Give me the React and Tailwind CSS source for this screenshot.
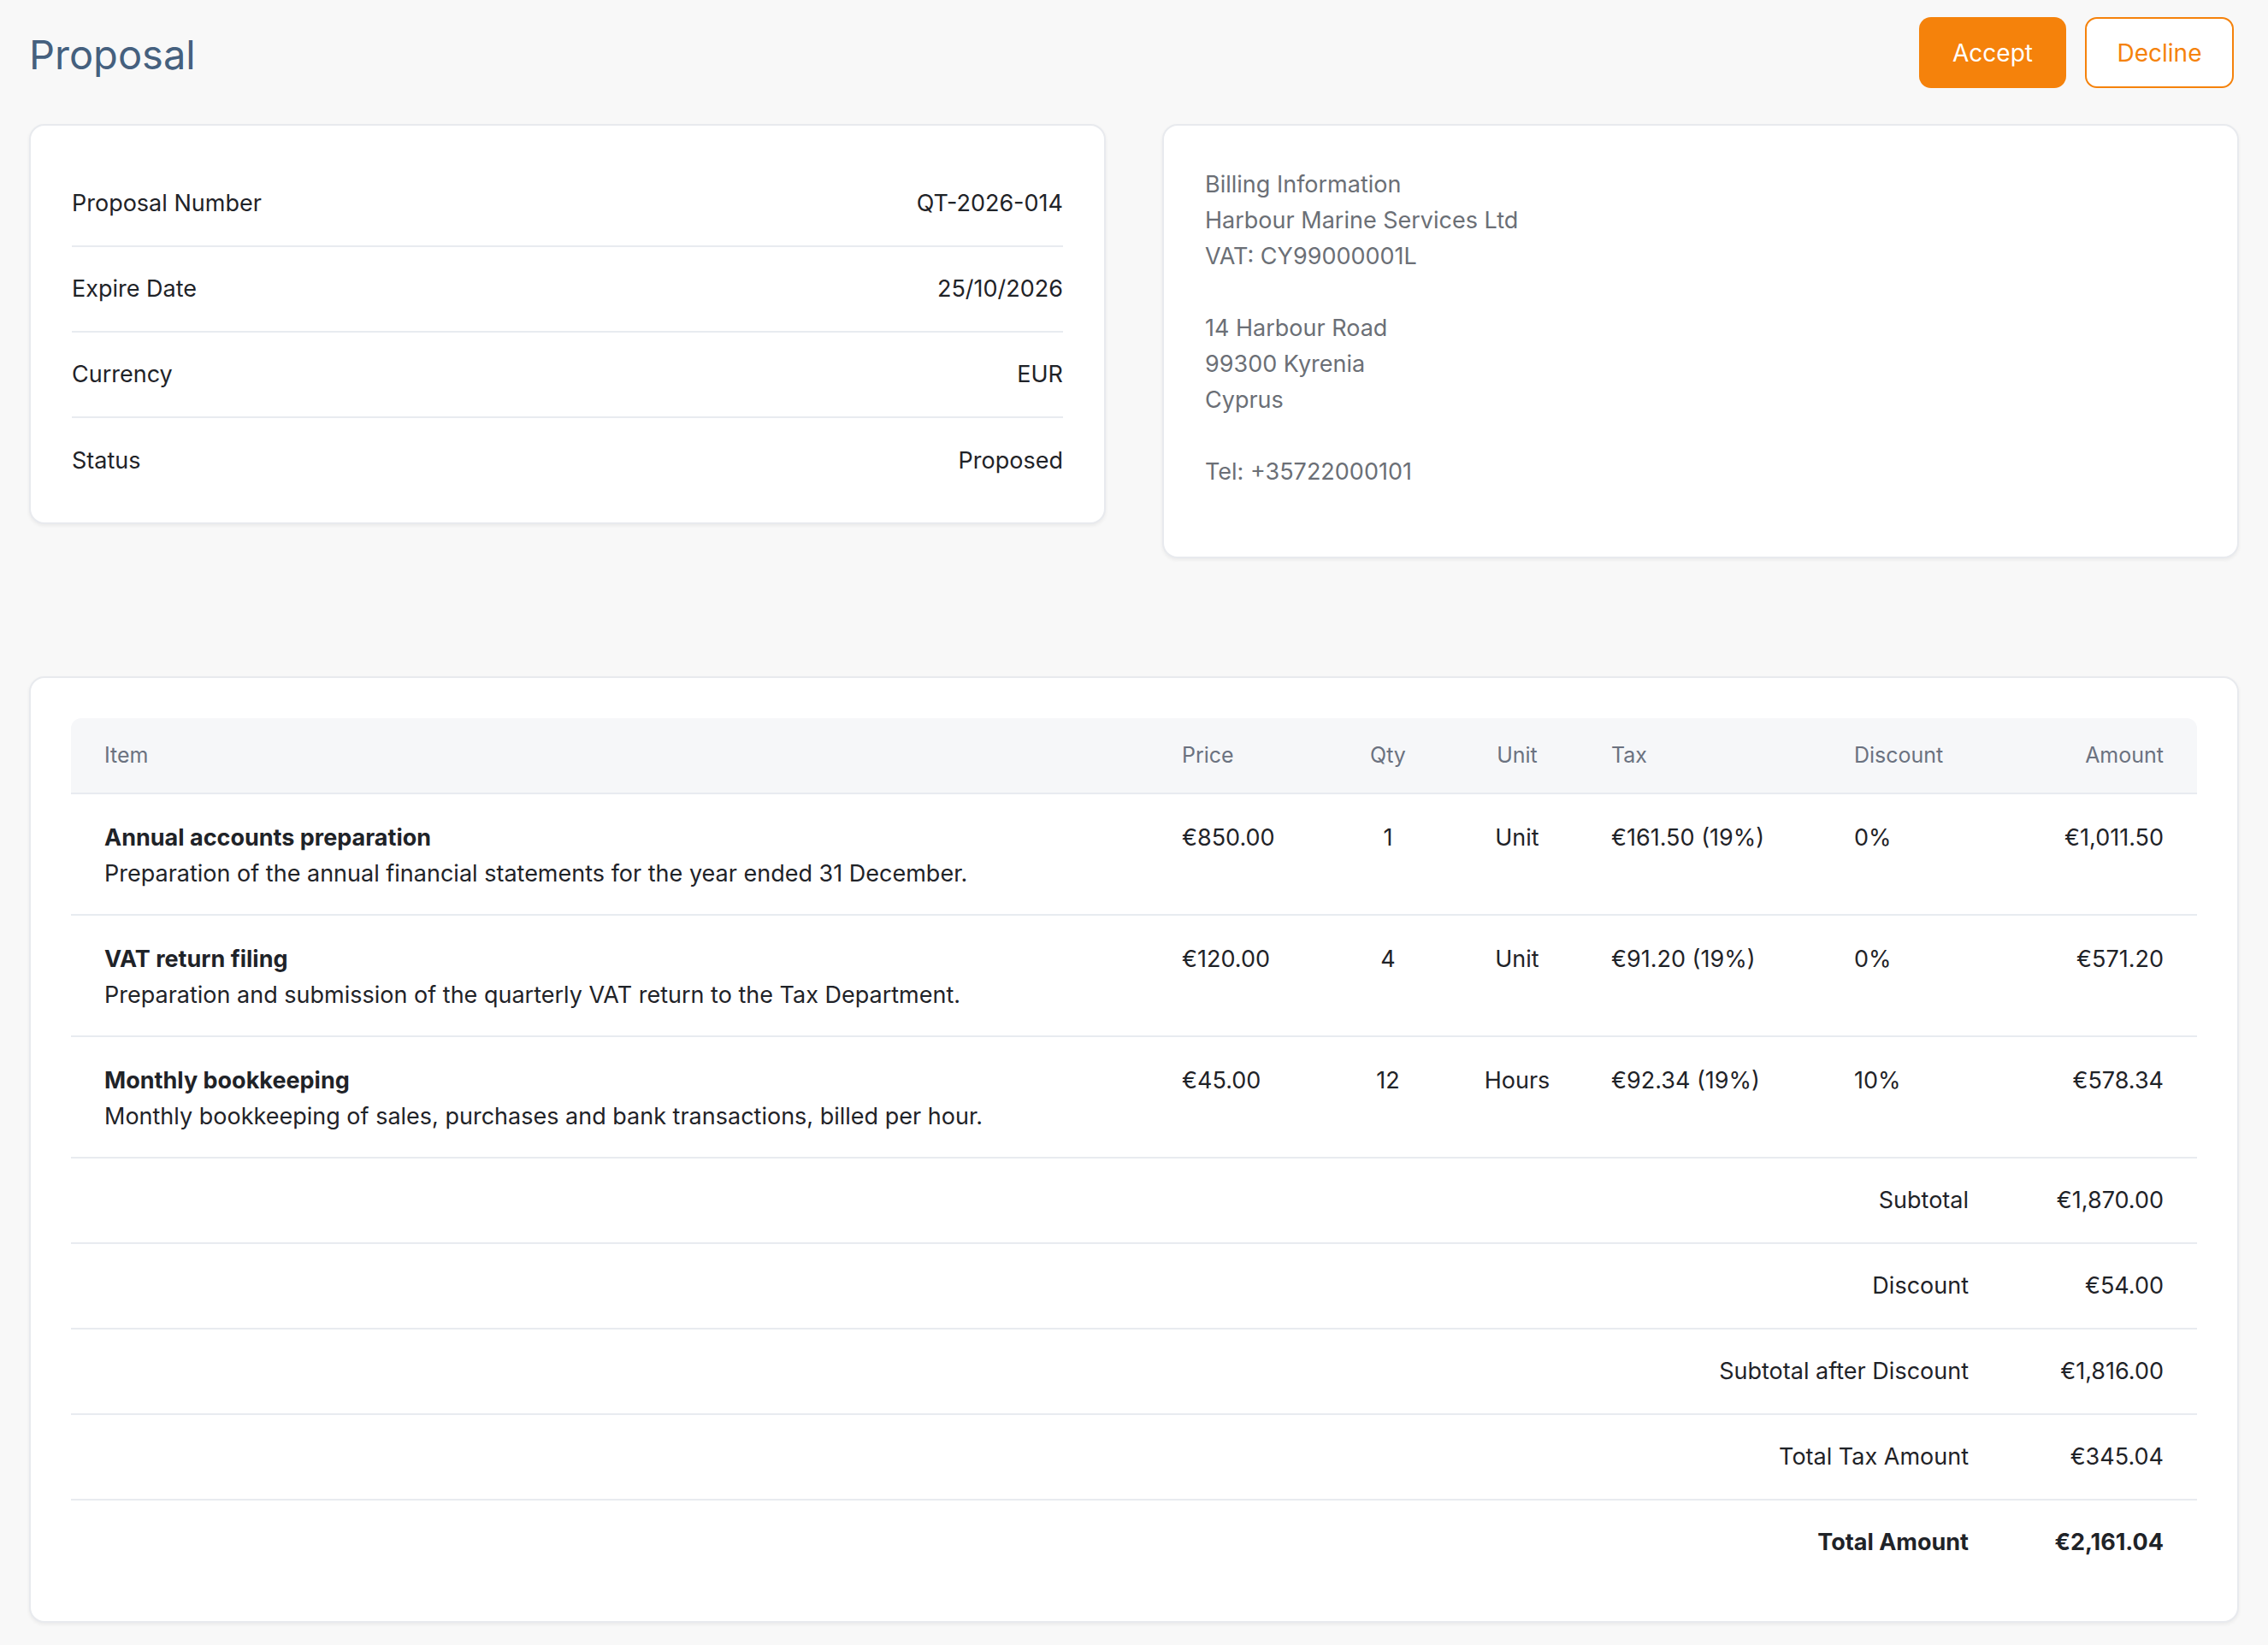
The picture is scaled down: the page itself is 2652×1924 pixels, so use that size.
const items = [
  { name: "Annual accounts preparation", desc: "Preparation of the annual financial statements for the year ended 31 December.", price: "€850.00", qty: "1", unit: "Unit", tax: "€161.50 (19%)", disc: "0%", amount: "€1,011.50" },
  { name: "VAT return filing", desc: "Preparation and submission of the quarterly VAT return to the Tax Department.", price: "€120.00", qty: "4", unit: "Unit", tax: "€91.20 (19%)", disc: "0%", amount: "€571.20" },
  { name: "Monthly bookkeeping", desc: "Monthly bookkeeping of sales, purchases and bank transactions, billed per hour.", price: "€45.00", qty: "12", unit: "Hours", tax: "€92.34 (19%)", disc: "10%", amount: "€578.34" },
];

const totals = [
  ["Subtotal", "€1,870.00"],
  ["Discount", "€54.00"],
  ["Subtotal after Discount", "€1,816.00"],
  ["Total Tax Amount", "€345.04"],
];

const details = [
  ["Proposal Number", "QT-2026-014"],
  ["Expire Date", "25/10/2026"],
  ["Currency", "EUR"],
  ["Status", "Proposed"],
];

export default function App() {
  return (
    <div className="min-h-[1924px] bg-[#f8f8f8] px-[34px] pt-[20px] pb-[22px] text-[27px] text-[#1f2328]" style={{ fontFamily: "Inter, 'Noto Sans', sans-serif" }}>
      <div className="flex items-start justify-between pr-[6px]">
        <h1 className="mt-[14px] text-[47px] leading-[60px] text-[#45607e]">Proposal</h1>
        <div className="flex gap-[22px]">
          <button className="h-[83px] w-[172px] rounded-[14px] bg-[#f5820b] text-[28px] text-white">Accept</button>
          <button className="h-[83px] w-[174px] rounded-[14px] border-2 border-[#f5820b] bg-white text-[28px] text-[#f5820b]">Decline</button>
        </div>
      </div>

      <div className="mt-[42px] flex items-start gap-[66px]">
        <div className="flex-1 rounded-[18px] border-2 border-[#e8eaee] bg-white px-[48px] pt-[42px] pb-[22px] shadow-[0_2px_4px_rgba(0,0,0,0.06)]">
          {details.map(([k, v], i) => (
            <div key={k} className={`flex h-[100px] items-center justify-between ${i < details.length - 1 ? "border-b-2 border-[#e8ebf0]" : ""}`}>
              <span>{k}</span>
              <span>{v}</span>
            </div>
          ))}
        </div>
        <div className="h-[508px] flex-1 rounded-[18px] border-2 border-[#e8eaee] bg-white px-[48px] pt-[48px] text-[27px] leading-[42px] text-[#6b6f76] shadow-[0_2px_4px_rgba(0,0,0,0.06)]">
          <div>Billing Information</div>
          <div>Harbour Marine Services Ltd</div>
          <div>VAT: CY99000001L</div>
          <div className="mt-[42px]">14 Harbour Road</div>
          <div>99300 Kyrenia</div>
          <div>Cyprus</div>
          <div className="mt-[42px]">Tel: +35722000101</div>
        </div>
      </div>

      <div className="mt-[138px] rounded-[18px] border-2 border-[#e8eaee] bg-white px-[47px] pt-[47px] pb-[42px] shadow-[0_2px_4px_rgba(0,0,0,0.06)]">
        <table className="w-full table-fixed border-collapse">
          <colgroup>
            <col className="w-[1260px]" />
            <col className="w-[200px]" />
            <col className="w-[160px]" />
            <col className="w-[142px]" />
            <col className="w-[284px]" />
            <col className="w-[200px]" />
            <col />
          </colgroup>
          <thead>
            <tr className="h-[88px] bg-[#f6f7f9] text-[25px] text-[#6b7280]">
              <th className="rounded-tl-[12px] pl-[39px] text-left font-normal">Item</th>
              <th className="pl-[39px] text-left font-normal">Price</th>
              <th className="text-center font-normal">Qty</th>
              <th className="text-center font-normal">Unit</th>
              <th className="pl-[39px] text-left font-normal">Tax</th>
              <th className="pl-[39px] text-left font-normal">Discount</th>
              <th className="rounded-tr-[12px] pr-[39px] text-right font-normal">Amount</th>
            </tr>
          </thead>
          <tbody>
            {items.map((it) => (
              <tr key={it.name} className="h-[142px] border-t-2 border-[#e8ebf0] align-top">
                <td className="pl-[39px] pt-[30px] leading-[42px]">
                  <div className="font-bold">{it.name}</div>
                  <div>{it.desc}</div>
                </td>
                <td className="pl-[39px] pt-[30px] leading-[42px]">{it.price}</td>
                <td className="pt-[30px] text-center leading-[42px]">{it.qty}</td>
                <td className="pt-[30px] text-center leading-[42px]">{it.unit}</td>
                <td className="pl-[39px] pt-[30px] leading-[42px]">{it.tax}</td>
                <td className="pl-[39px] pt-[30px] leading-[42px]">{it.disc}</td>
                <td className="pr-[39px] pt-[30px] text-right leading-[42px]">{it.amount}</td>
              </tr>
            ))}
            {totals.map(([k, v]) => (
              <tr key={k} className="h-[100px] border-t-2 border-[#e8ebf0]">
                <td colSpan={6} className="pr-[27px] text-right">{k}</td>
                <td className="pr-[39px] text-right">{v}</td>
              </tr>
            ))}
            <tr className="h-[100px] border-t-2 border-[#e8ebf0] font-bold">
              <td colSpan={6} className="pr-[27px] text-right">Total Amount</td>
              <td className="pr-[39px] text-right">€2,161.04</td>
            </tr>
          </tbody>
        </table>
      </div>
    </div>
  );
}
